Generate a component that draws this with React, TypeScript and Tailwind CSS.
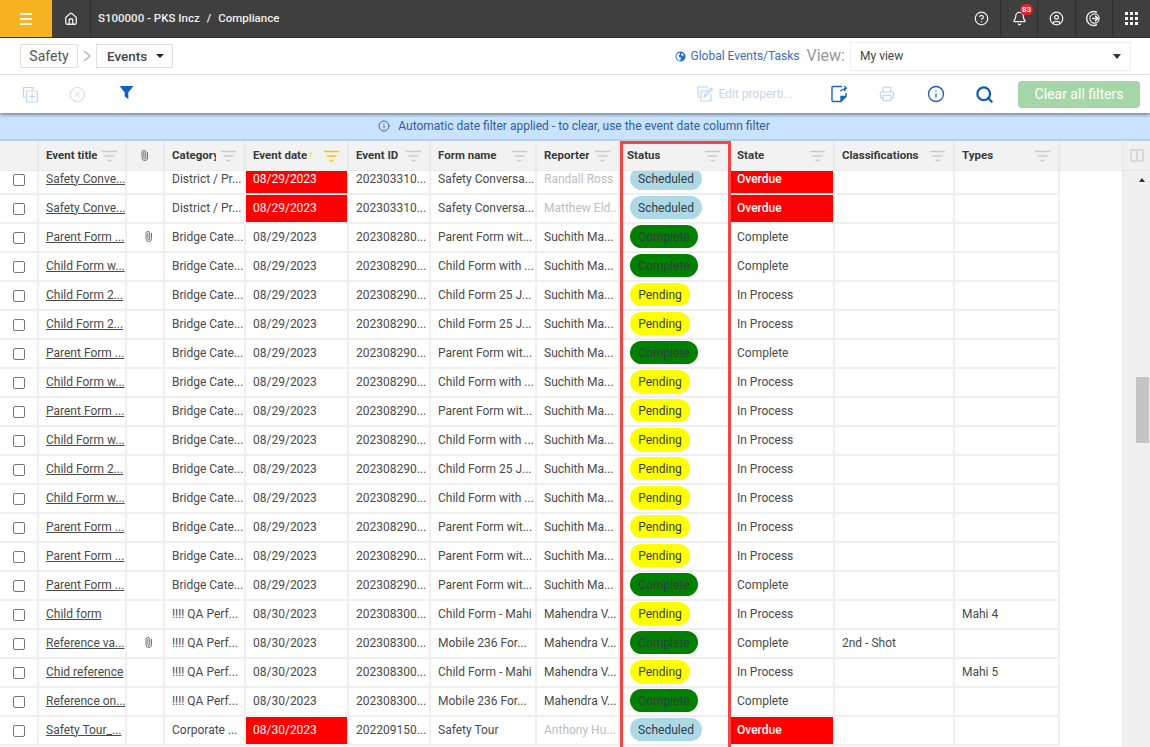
import { Home, CircleHelp, Bell, CircleUser, Info, Search, Printer, Paperclip, CirclePlus } from "lucide-react";

const COLS = "grid-cols-[39px_88px_38px_81px_103px_82px_106px_83px_110px_105px_120px_105px]";

const HEAD = ["", "Event title", "@", "Category", "Event date", "Event ID", "Form name", "Reporter", "Status", "State", "Classifications", "Types"];

type Row = {
  title: string; clip?: boolean; cat: string; date: string; late?: boolean; id: string;
  form: string; rep: string; repOff?: boolean; status: string; state: string; cls?: string; types?: string;
};

const b = "Bridge Cate...";
const d29 = "08/29/2023";
const d30 = "08/30/2023";
const id90 = "202308290...";
const su = "Suchith Ma...";
const parentF = "Parent Form wit...";
const childW = "Child Form with ...";
const child25 = "Child Form 25 J...";

const ROWS: Row[] = [
  { title: "Safety Conve...", cat: "District / Pr...", date: d29, late: true, id: "202303310...", form: "Safety Conversa...", rep: "Randall Ross", repOff: true, status: "Scheduled", state: "Overdue" },
  { title: "Safety Conve...", cat: "District / Pr...", date: d29, late: true, id: "202303310...", form: "Safety Conversa...", rep: "Matthew Eld...", repOff: true, status: "Scheduled", state: "Overdue" },
  { title: "Parent Form ...", clip: true, cat: b, date: d29, id: "202308280...", form: parentF, rep: su, status: "Complete", state: "Complete" },
  { title: "Child Form w...", cat: b, date: d29, id: id90, form: childW, rep: su, status: "Complete", state: "Complete" },
  { title: "Child Form 2...", cat: b, date: d29, id: id90, form: child25, rep: su, status: "Pending", state: "In Process" },
  { title: "Child Form 2...", cat: b, date: d29, id: id90, form: child25, rep: su, status: "Pending", state: "In Process" },
  { title: "Parent Form ...", cat: b, date: d29, id: id90, form: parentF, rep: su, status: "Complete", state: "Complete" },
  { title: "Child Form w...", cat: b, date: d29, id: id90, form: childW, rep: su, status: "Pending", state: "In Process" },
  { title: "Parent Form ...", cat: b, date: d29, id: id90, form: parentF, rep: su, status: "Pending", state: "In Process" },
  { title: "Child Form w...", cat: b, date: d29, id: id90, form: childW, rep: su, status: "Pending", state: "In Process" },
  { title: "Child Form 2...", cat: b, date: d29, id: id90, form: child25, rep: su, status: "Pending", state: "In Process" },
  { title: "Child Form w...", cat: b, date: d29, id: id90, form: childW, rep: su, status: "Pending", state: "In Process" },
  { title: "Parent Form ...", cat: b, date: d29, id: id90, form: parentF, rep: su, status: "Pending", state: "In Process" },
  { title: "Parent Form ...", cat: b, date: d29, id: id90, form: parentF, rep: su, status: "Pending", state: "In Process" },
  { title: "Parent Form ...", cat: b, date: d29, id: id90, form: parentF, rep: su, status: "Complete", state: "Complete" },
  { title: "Child form", cat: "!!!! QA Perf...", date: d30, id: "202308300...", form: "Child Form - Mahi", rep: "Mahendra V...", status: "Pending", state: "In Process", types: "Mahi 4" },
  { title: "Reference va...", clip: true, cat: "!!!! QA Perf...", date: d30, id: "202308300...", form: "Mobile 236 For...", rep: "Mahendra V...", status: "Complete", state: "Complete", cls: "2nd - Shot" },
  { title: "Chid reference", cat: "!!!! QA Perf...", date: d30, id: "202308300...", form: "Child Form - Mahi", rep: "Mahendra V...", status: "Pending", state: "In Process", types: "Mahi 5" },
  { title: "Reference on...", cat: "!!!! QA Perf...", date: d30, id: "202308300...", form: "Mobile 236 For...", rep: "Mahendra V...", status: "Complete", state: "Complete" },
  { title: "Safety Tour_...", cat: "Corporate ...", date: d30, late: true, id: "202209150...", form: "Safety Tour", rep: "Anthony Hu...", repOff: true, status: "Scheduled", state: "Overdue" },
];

function FilterLines({ on }: { on?: boolean }) {
  return (
    <svg width="15" height="12" viewBox="0 0 15 12" className={on ? "text-[#fbc400]" : "text-[#c9c9c9]"}>
      <path d="M0 1.5h15M2.5 6h10M5.5 10.5h4" stroke="currentColor" strokeWidth="1.6" />
    </svg>
  );
}

function Pill({ status }: { status: string }) {
  const cls =
    status === "Scheduled"
      ? "bg-[#add8e6] w-[72px]"
      : status === "Complete"
        ? "bg-[#008000] w-[68px]"
        : "bg-[#ffff00] w-[60px]";
  return (
    <span className={`h-[23px] rounded-full flex items-center justify-center text-[#333c46] ${cls}`}>{status}</span>
  );
}

function Cell({ children, cls = "" }: { children?: React.ReactNode; cls?: string }) {
  return <div className={`flex items-center pl-[7px] pb-[2px] whitespace-nowrap overflow-hidden border-r-2 border-[#efefef] ${cls}`}>{children}</div>;
}

function Clip() {
  return <Paperclip size={11} strokeWidth={2} className="text-[#6b6b6b] mx-auto -rotate-45" />;
}

export default function App() {
  return (
    <div className="h-screen overflow-hidden bg-white flex flex-col font-['Roboto',sans-serif] text-[12px] text-[#4a4a4a]">
      {/* top bar */}
      <div className="h-[38px] shrink-0 bg-[#3f3f3f] flex items-center text-[#efefef] border-b border-[#2e2e2e]">
        <div className="w-[52px] h-full bg-[#f6b221] flex items-center justify-center">
          <div className="w-[12px] flex flex-col gap-[3px]">
            <span className="h-[2px] bg-white/90" />
            <span className="h-[2px] bg-white/90" />
            <span className="h-[2px] bg-white/90" />
          </div>
        </div>
        <div className="w-[39px] h-full flex items-center justify-center border-r border-[#2e2e2e]">
          <Home size={14} strokeWidth={2.2} />
        </div>
        <div className="pl-[7px] font-medium whitespace-nowrap text-[11.5px]">
          S100000 - PKS Incz<span className="mx-[7px]">/</span>Compliance
        </div>
        <div className="ml-auto flex h-full">
          <div className="w-[38px] flex items-center justify-center border-r border-[#2e2e2e]">
            <CircleHelp size={15} strokeWidth={2} />
          </div>
          <div className="relative w-[37px] flex items-center justify-center border-r border-[#2e2e2e]">
            <Bell size={15} strokeWidth={2} />
            <span className="absolute left-[19px] top-[4px] w-[13px] h-[11px] rounded-full bg-[#e8202a] text-white text-[8px] font-bold flex items-center justify-center">83</span>
          </div>
          <div className="w-[38px] flex items-center justify-center border-r border-[#2e2e2e]">
            <CircleUser size={15} strokeWidth={2} />
          </div>
          <div className="w-[37px] flex items-center justify-center border-r border-[#2e2e2e]">
            <svg width="17" height="17" viewBox="0 0 17 17" fill="none" stroke="currentColor">
              <path d="M11 2.3A7 7 0 1 0 11 14.7" strokeWidth="1.4" />
              <circle cx="8.5" cy="8.5" r="4.6" strokeWidth="1.2" />
              <path d="M6 8.5h5M9 5.8l3 2.7-3 2.7" strokeWidth="1.6" />
            </svg>
          </div>
          <div className="w-[37px] flex items-center justify-center">
            <div className="grid grid-cols-3 gap-[2px]">
              {[0, 1, 2, 3, 4, 5, 6, 7, 8].map((i) => (
                <span key={i} className="w-[3px] h-[3px] bg-white" />
              ))}
            </div>
          </div>
        </div>
      </div>

      {/* breadcrumb row */}
      <div className="h-[37px] shrink-0 flex items-center border-b border-[#e2e2e2] pl-[20px] pr-[19px]">
        <div className="h-[24px] w-[58px] border border-[#e0e0e0] flex items-center justify-center text-[14px] text-[#555]">Safety</div>
        <svg width="18" height="12" viewBox="0 0 18 12" className="text-[#888]">
          <path d="M6 1l6 5-6 5" fill="none" stroke="currentColor" />
        </svg>
        <div className="h-[24px] w-[77px] border border-[#e0e0e0] flex items-center pl-[10px] text-[13.5px] font-medium text-[#444]">
          Events
          <span className="ml-[9px] border-x-[4px] border-t-[4px] border-x-transparent border-t-[#222]" />
        </div>
        <div className="ml-auto flex items-center">
          <svg width="11" height="11" viewBox="0 0 24 24" className="text-[#2a6bc4] mr-[4px]">
            <path fill="currentColor" d="M12 1a11 11 0 1 0 0 22 11 11 0 0 0 0-22zm-2 3l1 3-3 3 1 3 4 1-1 5-2 2c-4-1-7-4-7-9 0-4 4-8 7-8zm6 1l3 4-2 2-3-2-1-3z" />
          </svg>
          <span className="text-[#3c6cb4] whitespace-nowrap">Global Events/Tasks</span>
          <span className="text-[16px] text-[#999] ml-[7px] mr-[5px]">View:</span>
          <div className="w-[281px] h-[29px] border border-[#eee] flex items-center pl-[9px] pr-[9px] text-[#444]">
            My view
            <span className="ml-auto border-x-[4.5px] border-t-[5px] border-x-transparent border-t-[#333]" />
          </div>
        </div>
      </div>

      {/* toolbar */}
      <div className="relative z-10 h-[38px] shrink-0 flex items-center shadow-[0_2px_3px_rgba(60,70,90,0.55)] bg-white">
        <div className="w-[39px] flex justify-center pl-[21px]">
          <svg width="17" height="17" viewBox="0 0 17 17" fill="none" stroke="#bcd6f2" strokeWidth="1.2">
            <path d="M3 11H1.5V1.5H11V4" />
            <rect x="4.5" y="5" width="11" height="11" rx="1" />
            <path d="M10 7.5v6M7 10.5h6" />
          </svg>
        </div>
        <CirclePlus size={17} strokeWidth={1.2} className="text-[#bcd6f2] rotate-45 ml-[30px]" />
        <svg width="15" height="15" viewBox="0 0 15 15" className="ml-[33px] -mt-[3px]">
          <path d="M0.5 1h14L9.3 7.5v6.5L5.7 11.5v-4z" fill="#0f62c9" />
        </svg>
        <div className="ml-auto flex items-center pr-[10px]">
          <svg width="16" height="16" viewBox="0 0 16 16" fill="none" stroke="#bcd6f2" strokeWidth="1.2">
            <path d="M3 11H1V1h9v1.5" />
            <path d="M12 5H4v10h10V8" />
            <path d="M7 11l1-3 6-6 1.5 1.5-6 6z" />
          </svg>
          <span className="ml-[5px] text-[#c3d5ea] whitespace-nowrap">Edit properti...</span>
          <svg width="17" height="18" viewBox="0 0 17 18" fill="none" stroke="#1d63b8" strokeWidth="1.4" className="ml-[38px]">
            <path d="M11 1.5H2a1 1 0 0 0-1 1v13a1 1 0 0 0 1 1h8l5-5V8" />
            <path d="M10 16v-4.5h5" fill="#1d63b8" />
            <path d="M9 6l6-3M13 1l2.5 2L13 6" strokeWidth="1.2" />
          </svg>
          <Printer size={16} strokeWidth={1.6} className="text-[#b9cfe8] ml-[31px]" />
          <Info size={18} strokeWidth={1.7} className="text-[#1559b5] ml-[32px]" />
          <Search size={19} strokeWidth={2.8} className="text-[#0f5cb4] ml-[30px]" />
          <button className="ml-[24px] w-[122px] h-[27px] rounded-[4px] bg-[#a5d6a7] text-white text-[14px] font-normal">Clear all filters</button>
        </div>
      </div>

      {/* banner */}
      <div className="h-[28px] shrink-0 bg-[#c9e2fd] border-b-2 border-[#b9cfe8] flex items-center justify-center pr-[2px] text-[#2f5f98]">
        <Info size={12} strokeWidth={1.8} className="mr-[8px]" />
        Automatic date filter applied - to clear, use the event date column filter
      </div>

      {/* table */}
      <div className="relative flex-1 min-h-0 flex">
        <div className="flex-1 min-w-0 flex flex-col">
          <div className="h-[30px] shrink-0 bg-[#f2f2f2] border-b border-[#eaeaea]">
            <div className={`grid h-full ${COLS}`}>
              {HEAD.map((h, i) => (
                <div key={i} className="flex items-center pl-[7px] pr-[8px] border-r-2 border-[#e9e9e9] font-bold text-[#3a3a3a] text-[11.5px] whitespace-nowrap overflow-hidden">
                  {h === "@" ? (
                    <Clip />
                  ) : h ? (
                    <>
                      <span className="overflow-hidden">{h}</span>
                      {h === "Event date" && <span className="text-[#fbc400] ml-[1px] text-[11px] font-normal">↑</span>}
                      <span className="ml-auto pl-[5px] shrink-0">
                        <FilterLines on={h === "Event date"} />
                      </span>
                    </>
                  ) : null}
                </div>
              ))}
            </div>
          </div>
          <div className="flex-1 min-h-0 overflow-hidden">
            <div className="-mt-[5px] w-[1060px]">
              {ROWS.map((r, i) => (
                <div key={i} className={`grid h-[29px] border-b-2 border-[#efefef] ${COLS}`}>
                  <div className="flex items-center justify-center border-r-2 border-[#efefef]">
                    <span className="w-[12px] h-[12px] rounded-[2px] border border-[#757575] bg-white" />
                  </div>
                  <Cell>
                    <span className="underline text-[#4a4a4a]">{r.title}</span>
                  </Cell>
                  <Cell cls="pl-0">{r.clip && <Clip />}</Cell>
                  <Cell>{r.cat}</Cell>
                  <Cell cls={r.late ? "bg-[#ff0000] text-white" : ""}>{r.date}</Cell>
                  <Cell>{r.id}</Cell>
                  <Cell>{r.form}</Cell>
                  <Cell cls={r.repOff ? "text-[#bdbdbd]" : ""}>{r.rep}</Cell>
                  <Cell cls="pl-[10px]">
                    <Pill status={r.status} />
                  </Cell>
                  <Cell cls={r.late ? "bg-[#ff0000] text-white font-medium" : ""}>{r.state}</Cell>
                  <Cell>{r.cls}</Cell>
                  <Cell>{r.types}</Cell>
                </div>
              ))}
            </div>
          </div>
        </div>

        {/* scrollbar column */}
        <div className="w-[28px] shrink-0 bg-[#f0f0f0] border-l border-[#e6e6e6] flex flex-col">
          <div className="h-[30px] shrink-0 flex items-center justify-center border-b border-[#e6e6e6]">
            <span className="w-[14px] h-[13px] border-2 border-[#d8d8d8] rounded-[2px] flex justify-center">
              <span className="w-[2px] h-full bg-[#d8d8d8]" />
            </span>
          </div>
          <div className="flex-1 pl-[13px] pt-[7px] flex flex-col">
            <span className="w-0 h-0 ml-[3px] border-x-[3.5px] border-b-[4px] border-x-transparent border-b-[#333]" />
            <div className="w-[13px] h-[66px] bg-[#c4c4c4] mt-[195px]" />
          </div>
        </div>

        {/* red annotation around the Status column */}
        <div className="absolute left-[620px] top-0 bottom-0 w-[111px] border-x-[3px] border-t-[3px] border-[#f44545] pointer-events-none" />
      </div>
    </div>
  );
}
